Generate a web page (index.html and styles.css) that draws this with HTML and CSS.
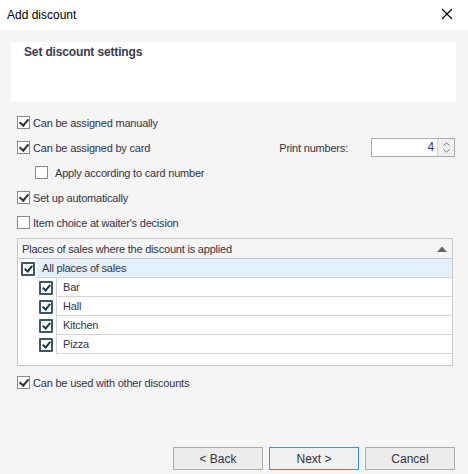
FILE: index.html
```
<!DOCTYPE html>
<html>
<head>
<meta charset="utf-8">
<link rel="stylesheet" href="styles.css">
</head>
<body>
<div class="win">
  <div class="titlebar">
    <span class="title">Add discount</span>
    <svg class="close" width="12" height="12" viewBox="0 0 12 12"><path d="M1 1L11 11M11 1L1 11" stroke="#000" stroke-width="1.1" fill="none"/></svg>
  </div>
  <div class="body">
    <div class="panel"><span class="panel-title">Set discount settings</span></div>
    <div class="options">
      <div class="row"><span class="cb checked"></span><span>Can be assigned manually</span></div>
      <div class="row row-split">
        <div class="row-left"><span class="cb checked"></span><span>Can be assigned by card</span></div>
        <div class="print">
          <span class="print-label">Print numbers:</span>
          <div class="spin">
            <div class="spin-value">4</div>
            <div class="spin-btns">
              <svg width="7" height="4" viewBox="0 0 7 4"><path d="M0.5 3.5L3.5 0.8L6.5 3.5" stroke="#777" fill="none"/></svg>
              <svg width="7" height="4" viewBox="0 0 7 4"><path d="M0.5 0.5L3.5 3.2L6.5 0.5" stroke="#777" fill="none"/></svg>
            </div>
          </div>
        </div>
      </div>
      <div class="row sub"><span class="cb"></span><span>Apply according to card number</span></div>
      <div class="row"><span class="cb checked"></span><span>Set up automatically</span></div>
      <div class="row"><span class="cb"></span><span>Item choice at waiter's decision</span></div>
    </div>
    <div class="grid">
      <div class="grid-head"><span>Places of sales where the discount is applied</span><svg width="10" height="6" viewBox="0 0 10 6"><path d="M0 6L5 0.5L10 6Z" fill="#666"/></svg></div>
      <div class="grow parent"><span class="gcb"></span><span class="gtext">All places of sales</span></div>
      <div class="grow child"><span class="gcb"></span><span class="gtext">Bar</span></div>
      <div class="grow child"><span class="gcb"></span><span class="gtext">Hall</span></div>
      <div class="grow child"><span class="gcb"></span><span class="gtext">Kitchen</span></div>
      <div class="grow child"><span class="gcb"></span><span class="gtext">Pizza</span></div>
    </div>
    <div class="row last"><span class="cb checked"></span><span>Can be used with other discounts</span></div>
    <div class="buttons">
      <button class="btn">&lt; Back</button>
      <button class="btn primary">Next &gt;</button>
      <button class="btn">Cancel</button>
    </div>
  </div>
</div>
</body>
</html>
```
FILE: styles.css
```
html, body { margin: 0; padding: 0; }
body {
  width: 468px; height: 474px; overflow: hidden;
  font-family: "Liberation Sans", "DejaVu Sans", sans-serif;
  font-size: 11px; letter-spacing: -0.2px; color: #333344;
  background: #f5f5f5;
}
.win { width: 468px; height: 474px; display: flex; flex-direction: column; }
.titlebar {
  height: 30px; background: #fff; display: flex; align-items: center;
  justify-content: space-between; padding: 0 15px 0 7px; box-sizing: border-box;
  color: #000;
}
.title { font-size: 12px; letter-spacing: 0; margin-top: -1px; }
.close { margin-top: -3px; }
.body { flex: 1; background: #f5f5f5; padding: 12px 12px 0 11px; display: flex; flex-direction: column; }
.panel { height: 60px; background: #fff; box-sizing: border-box; padding: 3px 0 0 13px; }
.panel-title { font-weight: bold; color: #3a3a4a; font-size: 12px; letter-spacing: -0.15px; }
.options { margin-top: 8px; padding-left: 6px; display: flex; flex-direction: column; }
.row { height: 25px; display: flex; align-items: center; gap: 3px; }
.row-split { justify-content: space-between; }
.row-left { display: flex; align-items: center; gap: 3px; }
.sub { padding-left: 18px; gap: 7px; }
.cb {
  width: 11px; height: 11px; border: 1px solid #8a8a8a; background: #fff; position: relative; flex: none;
}
.cb.checked::after {
  content: ""; position: absolute; left: 3px; top: 0px; width: 4px; height: 7px;
  border: solid #333; border-width: 0 2px 2px 0; transform: rotate(40deg);
}
.print { display: flex; align-items: center; margin-right: 1px; }
.print-label { margin-right: 23px; }
.spin { display: flex; width: 84px; height: 19px; border: 1px solid #aaa; background: #fff; box-sizing: border-box; }
.spin-value { flex: 1; text-align: right; padding-right: 3px; line-height: 17px; color: #333366; font-size: 12px; }
.spin-btns { width: 16px; background: #f0f0f0; border-left: 1px solid #d0d0d0; display: flex; flex-direction: column; align-items: center; justify-content: center; gap: 3px; }
.grid {
  margin: 3px 0 0 6px; width: 436px; height: 128px; box-sizing: border-box;
  border: 1px solid #c8c8c8; background: #fff;
}
.grid-head {
  height: 20px; background: #f5f5f5; border-bottom: 1px solid #c8c8c8; box-sizing: border-box;
  display: flex; align-items: center; justify-content: space-between; padding: 0 5px 0 4px;
}
.grow { height: 19px; display: flex; align-items: stretch; box-sizing: border-box; }
.gcb {
  width: 10px; height: 10px; flex: none; align-self: center;
  border: 2px solid #3c5670; background: #fff; position: relative; border-radius: 1px;
}
.gcb::after {
  content: ""; position: absolute; left: 3px; top: 0px; width: 3px; height: 6px;
  border: solid #153d3d; border-width: 0 2px 2px 0; transform: rotate(40deg);
}
.gtext { flex: 1; display: flex; align-items: center; border-bottom: 1px solid #d4d4d4; }
.parent { padding-left: 3px; }
.parent .gcb { margin-right: 2px; }
.parent .gtext { background: #e4f0fa; padding-left: 5px; }
.child { padding-left: 21px; }
.child .gcb { margin-right: 3px; }
.child .gtext { border-left: 1px solid #d4d4d4; padding-left: 6px; }
.last { margin: 4px 0 0 6px; }
.buttons { margin-top: auto; margin-bottom: 4px; display: flex; justify-content: flex-end; gap: 6px; padding-right: 1px; }
.btn {
  width: 90px; height: 23px; font-family: inherit; font-size: 12px; letter-spacing: 0; color: #333344;
  background: #ececec; border: 1px solid #adadad; padding: 0;
}
.btn.primary { border-color: #3c8ee6; background: #f0f0f0; }
```
